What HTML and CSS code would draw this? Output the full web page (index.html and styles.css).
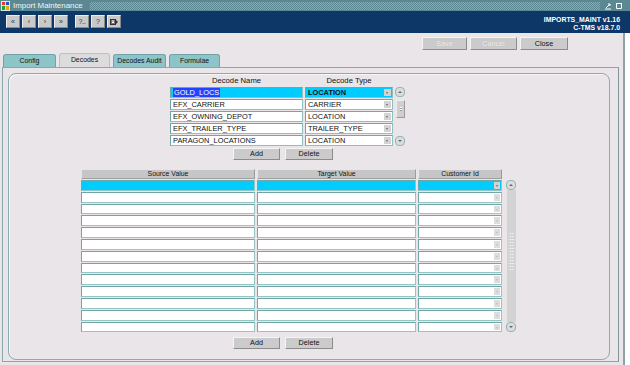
FILE: index.html
```html
<!DOCTYPE html>
<html>
<head>
<meta charset="utf-8">
<link rel="stylesheet" href="styles.css">
</head>
<body>
<div class="titlebar">
  <svg class="appicon" width="9" height="10" viewBox="0 0 9 10">
    <rect x="0" y="0" width="9" height="10" fill="#d8e4f0"/>
    <rect x="1" y="1" width="3" height="3" fill="#e04020"/>
    <rect x="5" y="1" width="3" height="3" fill="#2050d0"/>
    <rect x="1" y="5" width="3" height="4" fill="#20a040"/>
    <rect x="5" y="5" width="3" height="4" fill="#e0b000"/>
  </svg>
  <span class="title">Import Maintenance</span>
  <div class="dots"></div>
  <div class="winbtns">
    <svg width="8" height="8" viewBox="0 0 8 8"><path d="M1 7h6M2 6l4-4M4 2h2v2" stroke="#fff" stroke-width="1" fill="none"/></svg>
    <svg width="8" height="8" viewBox="0 0 8 8"><path d="M1.5 1.5h5v5h-5z" stroke="#fff" stroke-width="1" fill="none"/><path d="M1 1h6v1H1z" fill="#fff"/></svg>
  </div>
</div>
<div class="toolbar">
  <div class="navbtns">
    <div class="tbtn">&laquo;</div>
    <div class="tbtn">&lsaquo;</div>
    <div class="tbtn">&rsaquo;</div>
    <div class="tbtn">&raquo;</div>
    <div class="tbtn sep">?<u class="us">_</u></div>
    <div class="tbtn">?</div>
    <div class="tbtn"><svg width="8" height="6" viewBox="0 0 8 6"><rect x="0.5" y="0.5" width="5" height="5" fill="#777" stroke="#333"/><path d="M2 2h2M2 3.5h2" stroke="#fff"/><path d="M6 1l2 2-2 2z" fill="#333"/></svg></div>
  </div>
  <div class="version">
    <div>IMPORTS_MAINT v1.16</div>
    <div>C-TMS v18.7.0</div>
  </div>
</div>
<div class="content">
  <div class="actions">
    <div class="btn disabled w45">Save</div>
    <div class="btn disabled w46">Cancel</div>
    <div class="btn w48">Close</div>
  </div>
  <div class="tabs">
    <div class="tab w53">Config</div>
    <div class="tab sel w51">Decodes</div>
    <div class="tab w53">Decodes Audit</div>
    <div class="tab w51">Formulae</div>
  </div>
  <div class="canvas">
    <div class="panel">
      <div class="block decodes-block">
        <div class="decodes">
          <div class="hdr">Decode Name</div>
          <div class="hdr">Decode Type</div>

          <div class="fld cur"><span class="selected">GOLD_LOCS</span></div>
          <div class="fld cur combo"><b>LOCATION</b><span class="arrow"></span></div>

          <div class="fld">EFX_CARRIER</div>
          <div class="fld combo">CARRIER<span class="arrow"></span></div>

          <div class="fld">EFX_OWNING_DEPOT</div>
          <div class="fld combo">LOCATION<span class="arrow"></span></div>

          <div class="fld">EFX_TRAILER_TYPE</div>
          <div class="fld combo">TRAILER_TYPE<span class="arrow"></span></div>

          <div class="fld">PARAGON_LOCATIONS</div>
          <div class="fld combo">LOCATION<span class="arrow"></span></div>
        </div>
        <div class="vscroll small">
          <div class="sbtn"><i class="up"></i></div>
          <div class="thumb"><i></i></div>
          <div class="spacer"></div>
          <div class="sbtn"><i class="dn"></i></div>
        </div>
      </div>
      <div class="btnrow top">
        <div class="btn w47">Add</div>
        <div class="btn w48">Delete</div>
      </div>

      <div class="block values-block">
        <div class="values">
          <div class="colhdr">Source Value</div>
          <div class="colhdr">Target Value</div>
          <div class="colhdr">Customer Id</div>

          <div class="cell cur"></div><div class="cell cur"></div><div class="cell cur combo"><span class="arrow"></span></div>
          <div class="cell"></div><div class="cell"></div><div class="cell combo"><span class="arrow off"></span></div>
          <div class="cell"></div><div class="cell"></div><div class="cell combo"><span class="arrow off"></span></div>
          <div class="cell"></div><div class="cell"></div><div class="cell combo"><span class="arrow off"></span></div>
          <div class="cell"></div><div class="cell"></div><div class="cell combo"><span class="arrow off"></span></div>
          <div class="cell"></div><div class="cell"></div><div class="cell combo"><span class="arrow off"></span></div>
          <div class="cell"></div><div class="cell"></div><div class="cell combo"><span class="arrow off"></span></div>
          <div class="cell"></div><div class="cell"></div><div class="cell combo"><span class="arrow off"></span></div>
          <div class="cell"></div><div class="cell"></div><div class="cell combo"><span class="arrow off"></span></div>
          <div class="cell"></div><div class="cell"></div><div class="cell combo"><span class="arrow off"></span></div>
          <div class="cell"></div><div class="cell"></div><div class="cell combo"><span class="arrow off"></span></div>
          <div class="cell"></div><div class="cell"></div><div class="cell combo"><span class="arrow off"></span></div>
          <div class="cell"></div><div class="cell"></div><div class="cell combo"><span class="arrow off"></span></div>
        </div>
        <div class="vscroll big">
          <div class="sbtn"><i class="up"></i></div>
          <div class="track"><div class="grip"></div></div>
          <div class="sbtn"><i class="dn"></i></div>
        </div>
      </div>
      <div class="btnrow bottom">
        <div class="btn w47">Add</div>
        <div class="btn w48">Delete</div>
      </div>
    </div>
  </div>
</div>
</body>
</html>
```
FILE: styles.css
```css
* { box-sizing: border-box; }
html, body { margin: 0; padding: 0; }
body {
  width: 630px;
  height: 365px;
  overflow: hidden;
  background: #ffffff;
  font-family: "Liberation Sans", Arial, sans-serif;
  color: #111;
}

/* ---------- title bar ---------- */
.titlebar {
  height: 11px;
  background: #5b8893;
  display: flex;
  align-items: center;
  padding-left: 1px;
}
.appicon { flex: none; }
.title {
  margin-left: 3px;
  font-size: 7.9px;
  color: #f2f6f8;
  white-space: nowrap;
  line-height: 11px;
}
.dots {
  flex: 1;
  height: 8px;
  margin: 0 4px 0 7px;
  background: repeating-conic-gradient(#86aab2 0 25%, #5b8893 0 50%) 0 0 / 2px 2px;
}
.winbtns {
  display: flex;
  gap: 3px;
  padding-right: 7px;
}
.winbtns svg { display: block; }

/* ---------- toolbar ---------- */
.toolbar {
  height: 22px;
  background: #0d3766;
  display: flex;
  justify-content: space-between;
  align-items: flex-start;
}
.navbtns {
  display: flex;
  gap: 2px;
  padding: 4px 0 0 6px;
}
.tbtn {
  width: 14px;
  height: 13px;
  background: #c9c9c9;
  border: 1px solid;
  border-color: #eeeeee #8a8a8a #8a8a8a #eeeeee;
  font-size: 7px;
  line-height: 11px;
  text-align: center;
  color: #333;
  display: flex;
  align-items: center;
  justify-content: center;
}
.tbtn.sep { margin-left: 5px; }
.us { text-decoration: none; font-size: 6px; }
.version {
  padding: 5px 10px 0 0;
  text-align: right;
  color: #ffffff;
  font-weight: bold;
  font-size: 6.9px;
  line-height: 8px;
}

/* ---------- content ---------- */
.content {
  width: 625px;
  height: 332px;
  background: #e9e5e9;
  border-right: 2px solid #90a2a6;
  display: flex;
  flex-direction: column;
}
.actions {
  display: flex;
  justify-content: flex-end;
  gap: 3px;
  padding-right: 55px;
  margin-top: 4px;
}
.btn {
  height: 13px;
  background: #cbcbcb;
  border: 1px solid;
  border-color: #f4f4f4 #8c8c8c #8c8c8c #f4f4f4;
  font-size: 7.2px;
  line-height: 11px;
  text-align: center;
  color: #111;
}
.btn.disabled { color: #f3f3f3; text-shadow: 0 0 1px #a8a8a8; }
.w45 { width: 45px; }
.w46 { width: 47px; }
.w47 { width: 47px; }
.w48 { width: 48px; }
.w51 { width: 51px; }
.w53 { width: 53px; }

.tabs {
  display: flex;
  align-items: flex-end;
  gap: 3px;
  padding-left: 3px;
  margin-top: 3px;
  height: 14px;
}
.tab {
  height: 13px;
  background: #8dc4c7;
  border: 1px solid #6fa3a8;
  border-bottom: none;
  border-radius: 3px 3px 0 0;
  font-size: 6.9px;
  line-height: 12px;
  text-align: center;
  color: #111;
}
.tab.sel {
  height: 14px;
  background: #dcdcdc;
  border-color: #b9c3c4;
}

.canvas {
  margin-left: 2px;
  width: 617px;
  height: 295px;
  border: 1px solid #88a8ac;
  border-right-color: #7f979a;
  padding: 5px 8px 1px 5px;
}
.panel {
  height: 100%;
  border: 1px solid #88acb1;
  border-radius: 8px;
  box-shadow: inset 1px 1px 0 #f6f6f6;
  padding-top: 1px;
}

.block { display: flex; align-items: flex-start; }

/* ---------- decode grid ---------- */
.decodes-block { margin-left: 161px; }
.decodes {
  display: grid;
  grid-template-columns: 133px 88px;
  grid-template-rows: 11px repeat(5, 11px);
  column-gap: 2px;
  row-gap: 1px;
}
.hdr {
  font-size: 7.7px;
  line-height: 11px;
  text-align: center;
  color: #111;
}
.fld {
  background: #ffffff;
  border: 1px solid #8fbfbf;
  border-top-color: #6fa6a7;
  border-left-color: #6fa6a7;
  font-size: 7.4px;
  line-height: 9px;
  padding-left: 2px;
  white-space: nowrap;
  overflow: hidden;
  position: relative;
  color: #111;
}
.fld.cur, .cell.cur { background: #00ccff; }
.selected {
  background: #2244ff;
  color: #ffffff;
  padding: 0 1px;
}
.combo b { font-weight: bold; }
.arrow {
  position: absolute;
  right: 1px;
  top: 1px;
  bottom: 1px;
  width: 7px;
  background: #d3d3d3;
}
.arrow::after {
  content: "";
  position: absolute;
  left: 2px;
  top: 3px;
  border-left: 1.5px solid transparent;
  border-right: 1.5px solid transparent;
  border-top: 2px solid #6a6a6a;
}
.arrow.off { background: #dddddd; }
.arrow.off::after { border-top-color: #c0c0c0; }

.vscroll {
  display: flex;
  flex-direction: column;
  align-items: center;
}
.vscroll.small {
  margin-left: 2px;
  margin-top: 12px;
  height: 59px;
  width: 10px;
}
.vscroll.big {
  margin-left: 4px;
  margin-top: 11px;
  height: 152px;
  width: 10px;
}
.sbtn {
  width: 10px;
  height: 10px;
  border: 1px solid #8fb7ba;
  border-radius: 4px;
  background: #dcdcdc;
  position: relative;
  flex: none;
}
.sbtn i {
  position: absolute;
  left: 2px;
  border-left: 2px solid transparent;
  border-right: 2px solid transparent;
}
.sbtn i.up { top: 3px; border-bottom: 2px solid #666; }
.sbtn i.dn { top: 3px; border-top: 2px solid #666; }
.thumb {
  margin-top: 3px;
  width: 9px;
  height: 18px;
  background: #cfcfcf;
  border: 1px solid;
  border-color: #eeeeee #9a9a9a #9a9a9a #eeeeee;
  position: relative;
  flex: none;
}
.thumb i {
  position: absolute;
  left: 3px;
  top: 6px;
  width: 2px;
  height: 4px;
  background: repeating-linear-gradient(#fff 0 1px, #999 1px 2px);
}
.spacer { flex: 1; }
.track {
  flex: 1;
  width: 9px;
  background: #d3d3d3;
  position: relative;
}
.grip {
  position: absolute;
  left: 2px;
  top: 42px;
  width: 5px;
  height: 38px;
  background: radial-gradient(circle, #f8f8f8 0.7px, transparent 0.9px) 0 0 / 2.5px 3px;
}

.btnrow {
  display: flex;
  gap: 5px;
  margin-left: 224px;
}
.btnrow .btn { height: 12px; line-height: 10px; }
.btnrow.top { margin-top: 2px; }
.btnrow.bottom { margin-top: 5px; }

/* ---------- values grid ---------- */
.values-block { margin-top: 9px; margin-left: 72px; }
.values {
  display: grid;
  grid-template-columns: 174px 159px 84px;
  grid-template-rows: 10px repeat(13, 10.8px);
  column-gap: 2px;
  row-gap: 1px;
}
.colhdr {
  background: #c6c6c6;
  border: 1px solid;
  border-color: #e6e6e6 #9a9a9a #a0a0a0 #e6e6e6;
  font-size: 6.9px;
  line-height: 8px;
  text-align: center;
  color: #111;
}
.cell {
  background: #ffffff;
  border: 1px solid #98c4c4;
  border-top-color: #6fa6a7;
  border-left-color: #6fa6a7;
  position: relative;
}
.cell .arrow { width: 6px; }
.cell .arrow::after { left: 1.5px; }
```
